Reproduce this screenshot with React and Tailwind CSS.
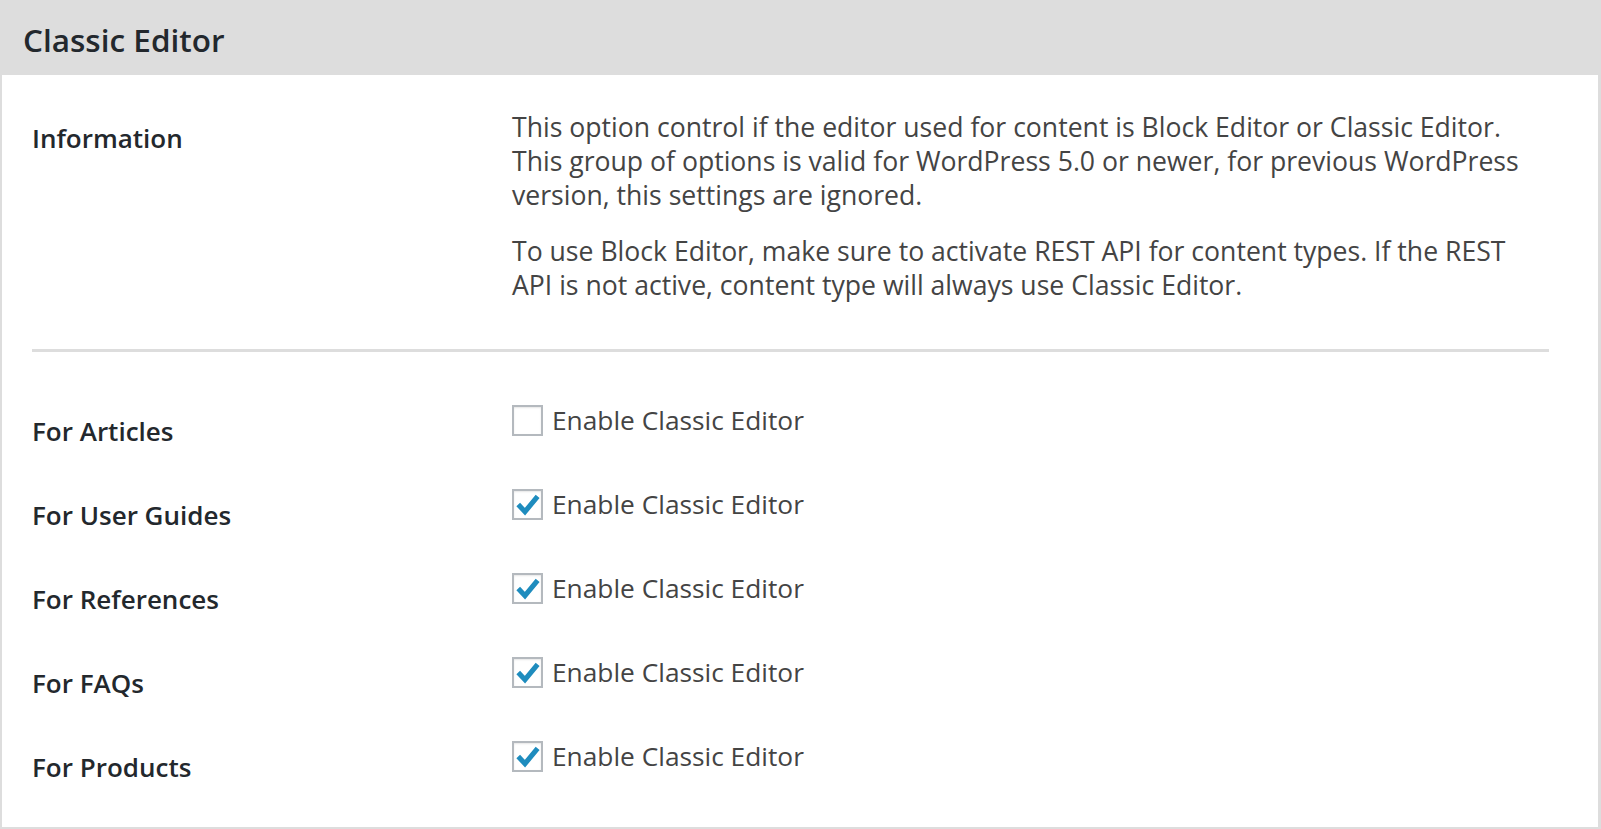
import React from 'react';

const rows = [
    { label: 'For Articles', checked: false },
    { label: 'For User Guides', checked: true },
    { label: 'For References', checked: true },
    { label: 'For FAQs', checked: true },
    { label: 'For Products', checked: true },
];

function Checkbox({ checked }) {
    return (
        <span className="flex h-[31px] w-[31px] shrink-0 items-center justify-center border-2 border-[#b4b9be] bg-white shadow-[inset_0_1px_2px_rgba(0,0,0,0.1)]">
            {checked && (
                <svg viewBox="0 0 32 32" className="h-[31px] w-[31px]">
                    <path d="M5 16 L13 24.5 L28 6.5" fill="none" stroke="#1e8cbe" strokeWidth="6" strokeLinejoin="miter" />
                </svg>
            )}
        </span>
    );
}

export default function App() {
    return (
        <div className="font-['Open_Sans',sans-serif] bg-white">
            <div className="border-2 border-r-[3px] border-[#dddddd]">
                <div className="flex h-[73px] items-center bg-[#dddddd] pl-[21px] pt-[3px]">
                    <h2 className="text-[31.5px] font-semibold leading-[42px] text-[#23282d]">Classic Editor</h2>
                </div>

                <div className="pl-[30px] pr-[49px] pt-[35px] pb-[2px]">
                    <div className="grid grid-cols-[480px_1fr]">
                        <div className="mt-[11px] text-[26px] font-semibold leading-[34px] text-[#23282d]">Information</div>
                        <div className="max-w-[1020px] text-[26.6px] leading-[34px] text-[#444444]">
                            <p>
                                This option control if the editor used for content is Block Editor or Classic Editor. This
                                group of options is valid for WordPress 5.0 or newer, for previous WordPress version, this
                                settings are ignored.
                            </p>
                            <p className="mt-[22px]">
                                To use Block Editor, make sure to activate REST API for content types. If the REST API is not
                                active, content type will always use Classic Editor.
                            </p>
                        </div>
                    </div>

                    <div className="mt-[47px] h-[3px] bg-[#dddddd]" />

                    <div className="mt-[53px]">
                        {rows.map((row) => (
                            <div key={row.label} className="grid h-[84px] grid-cols-[480px_1fr]">
                                <div className="mt-[9px] text-[26px] font-semibold leading-[34px] text-[#23282d]">{row.label}</div>
                                <label className="flex h-[31px] items-center gap-[9px] text-[26.3px] leading-[31px] text-[#444444]">
                                    <Checkbox checked={row.checked} />
                                    <span>Enable Classic Editor</span>
                                </label>
                            </div>
                        ))}
                    </div>
                </div>
            </div>
        </div>
    );
}
